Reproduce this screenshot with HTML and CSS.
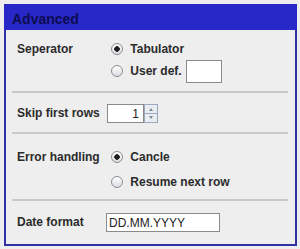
FILE: index.html
```html
<!DOCTYPE html>
<html lang="en">
<head>
    <meta charset="UTF-8">
    <meta name="viewport" content="width=device-width, initial-scale=1.0">
    <title>Advanced</title>
    <link rel="stylesheet" href="styles.css">
</head>
<body>

    <div class="panel">
        <div class="panel-title">Advanced</div>

        <div class="section sep-section">
            <div class="label">Seperator</div>
            <div class="options">
                <label class="option"><input type="radio" name="sep" checked> Tabulator</label>
                <label class="option"><input type="radio" name="sep"> User def. <input class="text-box short" type="text"></label>
            </div>
        </div>

        <div class="divider"></div>

        <div class="section skip-section">
            <div class="label short-row">Skip first rows</div>
            <div class="spinner">
                <input class="text-box spin-value" type="text" value="1">
                <div class="spin-buttons">
                    <div class="spin-btn up"></div>
                    <div class="spin-btn down"></div>
                </div>
            </div>
        </div>

        <div class="divider"></div>

        <div class="section error-section">
            <div class="label">Error handling</div>
            <div class="options">
                <label class="option"><input type="radio" name="err" checked> Cancle</label>
                <label class="option"><input type="radio" name="err"> Resume next row</label>
            </div>
        </div>

        <div class="divider"></div>

        <div class="section date-section">
            <div class="label short-row">Date format</div>
            <input class="text-box date" type="text" value="DD.MM.YYYY">
        </div>
    </div>

</body>
</html>
```

FILE: styles.css
```css
body {
    margin: 0;
    background-color: #eeeeee;
    font-family: "Liberation Sans", Arial, sans-serif;
    font-size: 12px;
    color: #2b2b2b;
}

.panel {
    margin: 4px 3px 3px 4px;
    height: 242px;
    box-sizing: border-box;
    border: 2px solid #3131a4;
    border-top: none;
    background-color: #eeeeee;
}

.panel-title {
    height: 26px;
    margin: 0 -2px;
    box-sizing: border-box;
    padding: 4px 0 0 8px;
    line-height: 22px;
    background-color: #2828c8;
    color: #0c0c50;
    font-size: 14px;
    font-weight: bold;
}

.section {
    display: flex;
    padding-left: 11px;
}

.sep-section {
    padding-top: 8px;
    padding-bottom: 9px;
}

.skip-section {
    padding-top: 11px;
    padding-bottom: 9px;
}

.error-section {
    padding-top: 12px;
    padding-bottom: 6px;
}

.date-section {
    padding-top: 12px;
}

.label {
    width: 89px;
    flex-shrink: 0;
    font-weight: bold;
    line-height: 22px;
}

.label.short-row {
    line-height: 19px;
}

.options {
    display: flex;
    flex-direction: column;
}

.error-section .options {
    gap: 3px;
}

.option {
    display: flex;
    align-items: center;
    height: 22px;
    font-weight: bold;
    white-space: pre;
}

.option input[type="radio"] {
    appearance: none;
    width: 12px;
    height: 12px;
    margin: 0 4px 0 5px;
    border: 1px solid #8d8d8d;
    border-radius: 50%;
    box-sizing: border-box;
    background: linear-gradient(#ffffff, #d9dde2);
}

.option input[type="radio"]:checked {
    background: radial-gradient(circle, #1e1e1e 0, #1e1e1e 2.5px, transparent 3px), linear-gradient(#ffffff, #d9dde2);
}

.text-box {
    box-sizing: border-box;
    margin: 0;
    padding: 0 2px;
    border: 1px solid #8a8a8a;
    background: white;
    font-family: "Liberation Sans", Arial, sans-serif;
    font-size: 12px;
    color: #222;
    outline: none;
}

.text-box.short {
    width: 36px;
    height: 23px;
    margin-left: 1px;
}

.spinner {
    display: flex;
    height: 19px;
    margin-left: 1px;
}

.spin-value {
    width: 37px;
    height: 19px;
    text-align: right;
    padding-right: 4px;
}

.spin-buttons {
    display: flex;
    flex-direction: column;
    width: 14px;
}

.spin-btn {
    flex: 1;
    box-sizing: border-box;
    border: 1px solid #9aaabe;
    background: #e9edf2;
    position: relative;
}

.spin-btn.down {
    border-top: none;
}

.spin-btn::after {
    content: "";
    position: absolute;
    left: 4px;
    top: 3px;
    border-left: 2.5px solid transparent;
    border-right: 2.5px solid transparent;
}

.spin-btn.up::after {
    border-bottom: 3px solid #7a8799;
}

.spin-btn.down::after {
    top: 2px;
    border-top: 3px solid #7a8799;
}

.text-box.date {
    width: 114px;
    height: 19px;
}

.divider {
    height: 2px;
    margin: 0 7px 0 6px;
    background-color: #c9c9c9;
}
```
